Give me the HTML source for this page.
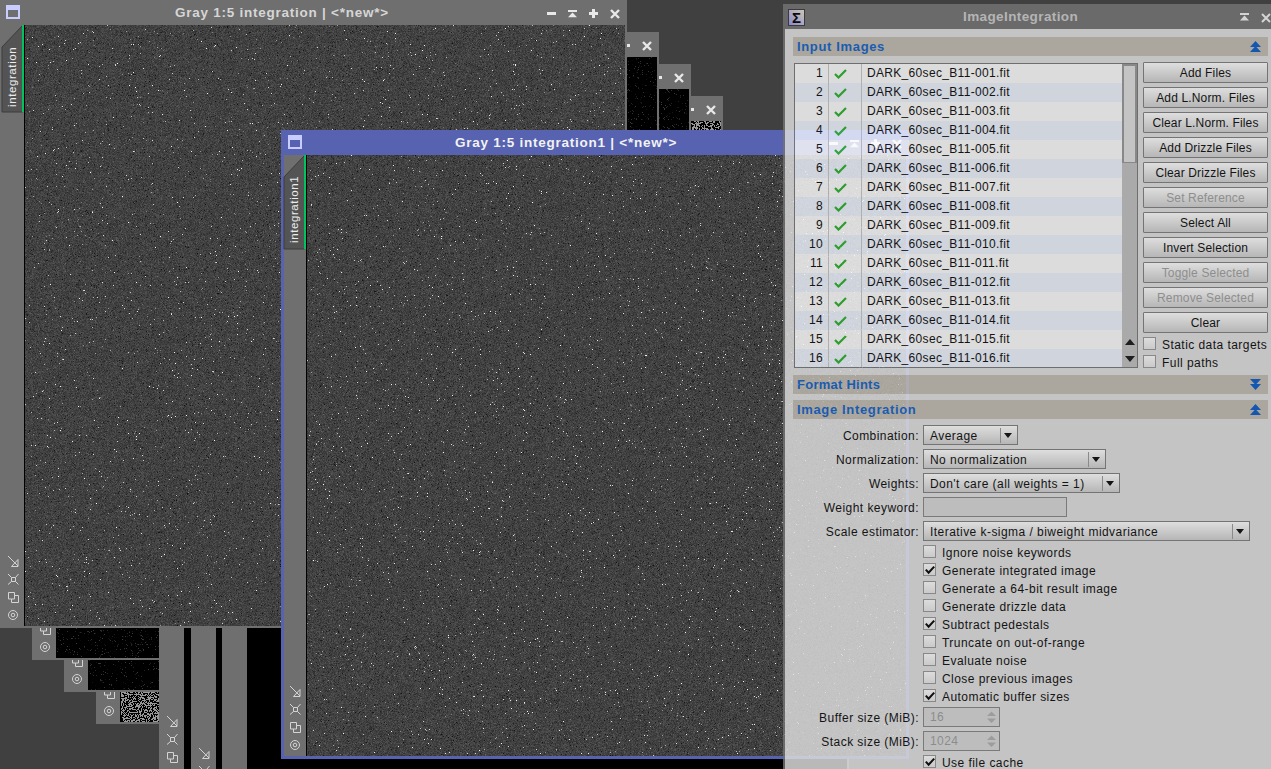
<!DOCTYPE html><html><head><meta charset="utf-8"><style>
*{box-sizing:border-box;margin:0;padding:0}
html,body{width:1271px;height:769px;overflow:hidden;background:#404040;font-family:"Liberation Sans",sans-serif}
body{position:relative}
.a{position:absolute}
canvas{position:absolute;left:0;top:0}
.win{position:absolute;width:627px;height:628px;background:#6f6f6f}
.ttl{position:absolute;top:0;height:25px;line-height:25px;font-weight:bold;font-size:13.5px;letter-spacing:0.75px;color:#d6d6d6;white-space:nowrap}
.t12{font-size:12px;letter-spacing:0.45px;color:#0b0b0b;white-space:nowrap}
.hdr{position:absolute;left:8px;width:475px;height:19px;background:#c1bcb2}
.hdr span{position:absolute;left:4px;top:0;line-height:19px;font-size:13px;font-weight:bold;letter-spacing:0.7px;color:#1362c8;white-space:nowrap}
.row{position:absolute;left:0;width:327px;height:19px;letter-spacing:0.32px}
.row .n{position:absolute;left:0;width:28px;text-align:right;line-height:19px}
.row .f{position:absolute;left:72px;line-height:19px}
.btn{position:absolute;width:125px;height:21px;border:1px solid #7f7f7f;border-radius:1px;background:linear-gradient(#fefefe,#cecece);text-align:center;line-height:21px;letter-spacing:0.15px}
.btn.dis{color:#9e9e9e}
.cb{position:absolute;width:13px;height:13px;border:1px solid #979797;background:linear-gradient(#fcfcfc,#e6e6e6)}
.lbl{position:absolute;line-height:16px}
.combo{position:absolute;height:20px;border:1px solid #7f7f7f;background:linear-gradient(#fefefe,#cecece)}
.combo span{position:absolute;left:6px;top:0;line-height:18px}
.combo i{position:absolute;top:2px;width:1px;height:15px;background:#999999}
.combo b{position:absolute;top:7px;width:0;height:0;border-left:4.5px solid transparent;border-right:4.5px solid transparent;border-top:5.5px solid #0b0b0b}
.rlbl{position:absolute;right:356px;line-height:20px;text-align:right}
</style></head><body>
<div class="win" style="left:96px;top:96px"><div class="a" style="left:24px;top:25px;width:601px;height:601px;background:#000"></div><div class="a" style="left:25px;top:25px;width:600px;height:601px;background:#4c4c4c"><canvas width="600" height="601" data-n="c" data-m="152"></canvas></div><div class="a" style="left:6px;top:5px;width:14px;height:14px;background:#c8ccff"><div class="a" style="left:2px;top:5px;width:10px;height:7px;background:#6f6f6f"></div></div><div class="a" style="left:547px;top:12px;width:9px;height:3px;background:#e8e8e8"></div><svg class="a" style="left:568px;top:10px" width="10" height="8"><rect x="0" y="0" width="9" height="2" fill="#e8e8e8"/><path d="M4.5 2.5L9 7.2H0Z" fill="#e8e8e8"/></svg><svg class="a" style="left:589px;top:9px" width="10" height="10"><rect x="3" y="0" width="3" height="9" fill="#e8e8e8"/><rect x="0" y="3" width="9" height="3" fill="#e8e8e8"/></svg><svg class="a" style="left:610px;top:9px" width="10" height="10"><path d="M1 1L9 9M9 1L1 9" stroke="#e8e8e8" stroke-width="2.4"/></svg><svg class="a" style="left:8px;top:556px" width="11" height="11" fill="none" stroke="#d4d4d4" stroke-width="1"><path d="M0 0L10 10M10 3.5V10.5H3.5L10 3.5"/></svg><svg class="a" style="left:8px;top:574px" width="11" height="11" fill="none" stroke="#d4d4d4" stroke-width="1"><path d="M3.5 3.5H7.5V7.5H3.5ZM0 0L3.5 3.5M10.5 0L7.5 3.5M0 10.5L3.5 7.5M10.5 10.5L7.5 7.5"/></svg><svg class="a" style="left:8px;top:592px" width="11" height="11" fill="none" stroke="#d4d4d4" stroke-width="1"><path d="M0.5 0.5H6.5V7H0.5ZM6.5 3.5H10.5V10.5H3.5V7"/></svg><svg class="a" style="left:8px;top:610px" width="11" height="11" fill="none" stroke="#d4d4d4" stroke-width="1"><circle cx="5" cy="5" r="4.5"/><circle cx="5" cy="5" r="1.8"/></svg></div>
<div class="win" style="left:64px;top:64px"><div class="a" style="left:24px;top:25px;width:601px;height:601px;background:#000"></div><div class="a" style="left:25px;top:25px;width:600px;height:601px;background:#000"><canvas width="600" height="601" data-n="b" data-m="60" data-st="0.08"></canvas></div><div class="a" style="left:6px;top:5px;width:14px;height:14px;background:#c8ccff"><div class="a" style="left:2px;top:5px;width:10px;height:7px;background:#6f6f6f"></div></div><div class="a" style="left:547px;top:12px;width:9px;height:3px;background:#e8e8e8"></div><svg class="a" style="left:568px;top:10px" width="10" height="8"><rect x="0" y="0" width="9" height="2" fill="#e8e8e8"/><path d="M4.5 2.5L9 7.2H0Z" fill="#e8e8e8"/></svg><svg class="a" style="left:589px;top:9px" width="10" height="10"><rect x="3" y="0" width="3" height="9" fill="#e8e8e8"/><rect x="0" y="3" width="9" height="3" fill="#e8e8e8"/></svg><svg class="a" style="left:610px;top:9px" width="10" height="10"><path d="M1 1L9 9M9 1L1 9" stroke="#e8e8e8" stroke-width="2.4"/></svg><svg class="a" style="left:8px;top:556px" width="11" height="11" fill="none" stroke="#d4d4d4" stroke-width="1"><path d="M0 0L10 10M10 3.5V10.5H3.5L10 3.5"/></svg><svg class="a" style="left:8px;top:574px" width="11" height="11" fill="none" stroke="#d4d4d4" stroke-width="1"><path d="M3.5 3.5H7.5V7.5H3.5ZM0 0L3.5 3.5M10.5 0L7.5 3.5M0 10.5L3.5 7.5M10.5 10.5L7.5 7.5"/></svg><svg class="a" style="left:8px;top:592px" width="11" height="11" fill="none" stroke="#d4d4d4" stroke-width="1"><path d="M0.5 0.5H6.5V7H0.5ZM6.5 3.5H10.5V10.5H3.5V7"/></svg><svg class="a" style="left:8px;top:610px" width="11" height="11" fill="none" stroke="#d4d4d4" stroke-width="1"><circle cx="5" cy="5" r="4.5"/><circle cx="5" cy="5" r="1.8"/></svg></div>
<div class="win" style="left:32px;top:32px"><div class="a" style="left:24px;top:25px;width:601px;height:601px;background:#000"></div><div class="a" style="left:25px;top:25px;width:600px;height:601px;background:#000"><canvas width="600" height="601" data-n="b" data-m="60" data-st="0.08"></canvas></div><div class="a" style="left:6px;top:5px;width:14px;height:14px;background:#c8ccff"><div class="a" style="left:2px;top:5px;width:10px;height:7px;background:#6f6f6f"></div></div><div class="a" style="left:547px;top:12px;width:9px;height:3px;background:#e8e8e8"></div><svg class="a" style="left:568px;top:10px" width="10" height="8"><rect x="0" y="0" width="9" height="2" fill="#e8e8e8"/><path d="M4.5 2.5L9 7.2H0Z" fill="#e8e8e8"/></svg><svg class="a" style="left:589px;top:9px" width="10" height="10"><rect x="3" y="0" width="3" height="9" fill="#e8e8e8"/><rect x="0" y="3" width="9" height="3" fill="#e8e8e8"/></svg><svg class="a" style="left:610px;top:9px" width="10" height="10"><path d="M1 1L9 9M9 1L1 9" stroke="#e8e8e8" stroke-width="2.4"/></svg><svg class="a" style="left:8px;top:556px" width="11" height="11" fill="none" stroke="#d4d4d4" stroke-width="1"><path d="M0 0L10 10M10 3.5V10.5H3.5L10 3.5"/></svg><svg class="a" style="left:8px;top:574px" width="11" height="11" fill="none" stroke="#d4d4d4" stroke-width="1"><path d="M3.5 3.5H7.5V7.5H3.5ZM0 0L3.5 3.5M10.5 0L7.5 3.5M0 10.5L3.5 7.5M10.5 10.5L7.5 7.5"/></svg><svg class="a" style="left:8px;top:592px" width="11" height="11" fill="none" stroke="#d4d4d4" stroke-width="1"><path d="M0.5 0.5H6.5V7H0.5ZM6.5 3.5H10.5V10.5H3.5V7"/></svg><svg class="a" style="left:8px;top:610px" width="11" height="11" fill="none" stroke="#d4d4d4" stroke-width="1"><circle cx="5" cy="5" r="4.5"/><circle cx="5" cy="5" r="1.8"/></svg></div>
<div class="win" style="left:159px;top:160px"><div class="a" style="left:25px;top:25px;width:600px;height:601px;background:#000"></div><div class="a" style="left:26px;top:25px;width:599px;height:601px;background:#000"></div><div class="a" style="left:6px;top:5px;width:14px;height:14px;background:#c8ccff"><div class="a" style="left:2px;top:5px;width:10px;height:7px;background:#6f6f6f"></div></div><div class="a" style="left:547px;top:12px;width:9px;height:3px;background:#e8e8e8"></div><svg class="a" style="left:568px;top:10px" width="10" height="8"><rect x="0" y="0" width="9" height="2" fill="#e8e8e8"/><path d="M4.5 2.5L9 7.2H0Z" fill="#e8e8e8"/></svg><svg class="a" style="left:589px;top:9px" width="10" height="10"><rect x="3" y="0" width="3" height="9" fill="#e8e8e8"/><rect x="0" y="3" width="9" height="3" fill="#e8e8e8"/></svg><svg class="a" style="left:610px;top:9px" width="10" height="10"><path d="M1 1L9 9M9 1L1 9" stroke="#e8e8e8" stroke-width="2.4"/></svg><svg class="a" style="left:8px;top:556px" width="11" height="11" fill="none" stroke="#d4d4d4" stroke-width="1"><path d="M0 0L10 10M10 3.5V10.5H3.5L10 3.5"/></svg><svg class="a" style="left:8px;top:574px" width="11" height="11" fill="none" stroke="#d4d4d4" stroke-width="1"><path d="M3.5 3.5H7.5V7.5H3.5ZM0 0L3.5 3.5M10.5 0L7.5 3.5M0 10.5L3.5 7.5M10.5 10.5L7.5 7.5"/></svg><svg class="a" style="left:8px;top:592px" width="11" height="11" fill="none" stroke="#d4d4d4" stroke-width="1"><path d="M0.5 0.5H6.5V7H0.5ZM6.5 3.5H10.5V10.5H3.5V7"/></svg><svg class="a" style="left:8px;top:610px" width="11" height="11" fill="none" stroke="#d4d4d4" stroke-width="1"><circle cx="5" cy="5" r="4.5"/><circle cx="5" cy="5" r="1.8"/></svg></div>
<div class="win" style="left:191px;top:192px"><div class="a" style="left:25px;top:25px;width:600px;height:601px;background:#000"></div><div class="a" style="left:26px;top:25px;width:599px;height:601px;background:#000"></div><div class="a" style="left:6px;top:5px;width:14px;height:14px;background:#c8ccff"><div class="a" style="left:2px;top:5px;width:10px;height:7px;background:#6f6f6f"></div></div><div class="a" style="left:547px;top:12px;width:9px;height:3px;background:#e8e8e8"></div><svg class="a" style="left:568px;top:10px" width="10" height="8"><rect x="0" y="0" width="9" height="2" fill="#e8e8e8"/><path d="M4.5 2.5L9 7.2H0Z" fill="#e8e8e8"/></svg><svg class="a" style="left:589px;top:9px" width="10" height="10"><rect x="3" y="0" width="3" height="9" fill="#e8e8e8"/><rect x="0" y="3" width="9" height="3" fill="#e8e8e8"/></svg><svg class="a" style="left:610px;top:9px" width="10" height="10"><path d="M1 1L9 9M9 1L1 9" stroke="#e8e8e8" stroke-width="2.4"/></svg><svg class="a" style="left:8px;top:556px" width="11" height="11" fill="none" stroke="#d4d4d4" stroke-width="1"><path d="M0 0L10 10M10 3.5V10.5H3.5L10 3.5"/></svg><svg class="a" style="left:8px;top:574px" width="11" height="11" fill="none" stroke="#d4d4d4" stroke-width="1"><path d="M3.5 3.5H7.5V7.5H3.5ZM0 0L3.5 3.5M10.5 0L7.5 3.5M0 10.5L3.5 7.5M10.5 10.5L7.5 7.5"/></svg><svg class="a" style="left:8px;top:592px" width="11" height="11" fill="none" stroke="#d4d4d4" stroke-width="1"><path d="M0.5 0.5H6.5V7H0.5ZM6.5 3.5H10.5V10.5H3.5V7"/></svg><svg class="a" style="left:8px;top:610px" width="11" height="11" fill="none" stroke="#d4d4d4" stroke-width="1"><circle cx="5" cy="5" r="4.5"/><circle cx="5" cy="5" r="1.8"/></svg></div>
<div class="win" style="left:222px;top:224px"><div class="a" style="left:25px;top:25px;width:600px;height:601px;background:#000"></div><div class="a" style="left:26px;top:25px;width:599px;height:601px;background:#000"></div><div class="a" style="left:6px;top:5px;width:14px;height:14px;background:#c8ccff"><div class="a" style="left:2px;top:5px;width:10px;height:7px;background:#6f6f6f"></div></div><div class="a" style="left:547px;top:12px;width:9px;height:3px;background:#e8e8e8"></div><svg class="a" style="left:568px;top:10px" width="10" height="8"><rect x="0" y="0" width="9" height="2" fill="#e8e8e8"/><path d="M4.5 2.5L9 7.2H0Z" fill="#e8e8e8"/></svg><svg class="a" style="left:589px;top:9px" width="10" height="10"><rect x="3" y="0" width="3" height="9" fill="#e8e8e8"/><rect x="0" y="3" width="9" height="3" fill="#e8e8e8"/></svg><svg class="a" style="left:610px;top:9px" width="10" height="10"><path d="M1 1L9 9M9 1L1 9" stroke="#e8e8e8" stroke-width="2.4"/></svg><svg class="a" style="left:8px;top:556px" width="11" height="11" fill="none" stroke="#d4d4d4" stroke-width="1"><path d="M0 0L10 10M10 3.5V10.5H3.5L10 3.5"/></svg><svg class="a" style="left:8px;top:574px" width="11" height="11" fill="none" stroke="#d4d4d4" stroke-width="1"><path d="M3.5 3.5H7.5V7.5H3.5ZM0 0L3.5 3.5M10.5 0L7.5 3.5M0 10.5L3.5 7.5M10.5 10.5L7.5 7.5"/></svg><svg class="a" style="left:8px;top:592px" width="11" height="11" fill="none" stroke="#d4d4d4" stroke-width="1"><path d="M0.5 0.5H6.5V7H0.5ZM6.5 3.5H10.5V10.5H3.5V7"/></svg><svg class="a" style="left:8px;top:610px" width="11" height="11" fill="none" stroke="#d4d4d4" stroke-width="1"><circle cx="5" cy="5" r="4.5"/><circle cx="5" cy="5" r="1.8"/></svg></div>
<div class="win" style="left:0px;top:0px"><div class="a" style="left:24px;top:25px;width:601px;height:601px;background:#000"></div><div class="a" style="left:25px;top:25px;width:600px;height:601px;background:#424242"><canvas width="600" height="601" data-n="g" data-m="65" data-sd="10" data-st="0.009"></canvas></div><div class="a" style="left:6px;top:5px;width:14px;height:14px;background:#c8ccff"><div class="a" style="left:2px;top:5px;width:10px;height:7px;background:#6f6f6f"></div></div><div class="ttl" style="left:175px">Gray 1:5 integration | &lt;*new*&gt;</div><div class="a" style="left:547px;top:12px;width:9px;height:3px;background:#e8e8e8"></div><svg class="a" style="left:568px;top:10px" width="10" height="8"><rect x="0" y="0" width="9" height="2" fill="#e8e8e8"/><path d="M4.5 2.5L9 7.2H0Z" fill="#e8e8e8"/></svg><svg class="a" style="left:589px;top:9px" width="10" height="10"><rect x="3" y="0" width="3" height="9" fill="#e8e8e8"/><rect x="0" y="3" width="9" height="3" fill="#e8e8e8"/></svg><svg class="a" style="left:610px;top:9px" width="10" height="10"><path d="M1 1L9 9M9 1L1 9" stroke="#e8e8e8" stroke-width="2.4"/></svg><svg class="a" style="left:8px;top:556px" width="11" height="11" fill="none" stroke="#d4d4d4" stroke-width="1"><path d="M0 0L10 10M10 3.5V10.5H3.5L10 3.5"/></svg><svg class="a" style="left:8px;top:574px" width="11" height="11" fill="none" stroke="#d4d4d4" stroke-width="1"><path d="M3.5 3.5H7.5V7.5H3.5ZM0 0L3.5 3.5M10.5 0L7.5 3.5M0 10.5L3.5 7.5M10.5 10.5L7.5 7.5"/></svg><svg class="a" style="left:8px;top:592px" width="11" height="11" fill="none" stroke="#d4d4d4" stroke-width="1"><path d="M0.5 0.5H6.5V7H0.5ZM6.5 3.5H10.5V10.5H3.5V7"/></svg><svg class="a" style="left:8px;top:610px" width="11" height="11" fill="none" stroke="#d4d4d4" stroke-width="1"><circle cx="5" cy="5" r="4.5"/><circle cx="5" cy="5" r="1.8"/></svg><svg class="a" style="left:0px;top:25px" width="25" height="90"><path d="M2 22L22.5 0.5V87H2Z" fill="#545454" stroke="#3c3c3c" stroke-width="1"/><rect x="22" y="0" width="2" height="87" fill="#00c25e"/></svg><div class="a" style="left:6px;top:107px;transform-origin:0 0;transform:rotate(-90deg);font-size:11.5px;line-height:12px;color:#ececec;white-space:nowrap;letter-spacing:0.6px">integration</div></div>
<div class="a" style="left:281px;top:130px;width:628px;height:629px;background:#5762b0"><div class="a" style="left:7px;top:5px;width:14px;height:14px;background:#c8ccff"><div class="a" style="left:2px;top:5px;width:10px;height:7px;background:#5762b0"></div></div><div class="ttl" style="left:174px;color:#f2f2f2">Gray 1:5 integration1 | &lt;*new*&gt;</div><div class="a" style="left:3px;top:25px;width:22px;height:601px;background:#6f6f6f"></div><div class="a" style="left:25px;top:25px;width:600px;height:601px;background:#000"></div><div class="a" style="left:26px;top:25px;width:599px;height:601px;background:#424242"><canvas width="599" height="601" data-n="g" data-m="65" data-sd="10" data-st="0.009"></canvas></div><div class="a" style="left:1px;top:0"><svg class="a" style="left:0px;top:25px" width="25" height="97"><path d="M2 22L22.5 0.5V94H2Z" fill="#545454" stroke="#3c3c3c" stroke-width="1"/><rect x="22" y="0" width="2" height="94" fill="#00c25e"/></svg><div class="a" style="left:6px;top:113px;transform-origin:0 0;transform:rotate(-90deg);font-size:11.5px;line-height:12px;color:#ececec;white-space:nowrap;letter-spacing:0.6px">integration1</div></div><div class="a" style="left:548px;top:12px;width:9px;height:3px;background:#f0f0f0"></div><svg class="a" style="left:569px;top:10px" width="10" height="8"><rect x="0" y="0" width="9" height="2" fill="#f0f0f0"/><path d="M4.5 2.5L9 7.2H0Z" fill="#f0f0f0"/></svg><svg class="a" style="left:590px;top:9px" width="10" height="10"><rect x="3" y="0" width="3" height="9" fill="#f0f0f0"/><rect x="0" y="3" width="9" height="3" fill="#f0f0f0"/></svg><svg class="a" style="left:611px;top:9px" width="10" height="10"><path d="M1 1L9 9M9 1L1 9" stroke="#f0f0f0" stroke-width="2.4"/></svg><svg class="a" style="left:9px;top:556px" width="11" height="11" fill="none" stroke="#d4d4d4" stroke-width="1"><path d="M0 0L10 10M10 3.5V10.5H3.5L10 3.5"/></svg><svg class="a" style="left:9px;top:574px" width="11" height="11" fill="none" stroke="#d4d4d4" stroke-width="1"><path d="M3.5 3.5H7.5V7.5H3.5ZM0 0L3.5 3.5M10.5 0L7.5 3.5M0 10.5L3.5 7.5M10.5 10.5L7.5 7.5"/></svg><svg class="a" style="left:9px;top:592px" width="11" height="11" fill="none" stroke="#d4d4d4" stroke-width="1"><path d="M0.5 0.5H6.5V7H0.5ZM6.5 3.5H10.5V10.5H3.5V7"/></svg><svg class="a" style="left:9px;top:610px" width="11" height="11" fill="none" stroke="#d4d4d4" stroke-width="1"><circle cx="5" cy="5" r="4.5"/><circle cx="5" cy="5" r="1.8"/></svg></div>
<div class="a" style="left:783px;top:4px;width:490px;height:770px;opacity:0.83;background:#737373"><div class="a" style="left:5px;top:5px;width:17px;height:17px;border:1px solid #3a3a3a;background:linear-gradient(45deg,#9898f0,#ece0c8);font-size:15px;font-weight:bold;line-height:16px;text-align:center;color:#000">&#931;</div><div class="ttl" style="left:180px;color:#cccccc;letter-spacing:0.4px">ImageIntegration</div><svg class="a" style="left:457px;top:9px" width="10" height="9"><rect x="0" y="0" width="9" height="2" fill="#f2f2f2"/><path d="M4.5 2.5L9 7.5H0Z" fill="#f2f2f2"/></svg><svg class="a" style="left:478px;top:9px" width="10" height="10"><path d="M1 1L9 9M9 1L1 9" stroke="#f2f2f2" stroke-width="2"/></svg><div class="a" style="left:2px;top:25px;width:490px;height:750px;background:#dfdfdf"><div class="hdr" style="top:8px"><span style="letter-spacing:0.65px">Input Images</span><svg class="a" style="left:457px;top:4px" width="11" height="11"><path d="M0 6L5.5 0L11 6Z M0 11L5.5 5L11 11Z" fill="#0d5bc7"/></svg></div><div class="a" style="left:9px;top:34px;width:344px;height:305px;border:1px solid #777777;background:#fcfcfc;overflow:hidden"><div class="row t12" style="top:0px;background:#fcfcfc"><span class="n">1</span><span class="f">DARK_60sec_B11-001.fit</span><svg class="a" style="left:39px;top:5px" width="13" height="10"><path d="M1 5L4.5 8.5L12 1" fill="none" stroke="#2ab12a" stroke-width="2.2"/></svg></div><div class="row t12" style="top:19px;background:#ecf2fd"><span class="n">2</span><span class="f">DARK_60sec_B11-002.fit</span><svg class="a" style="left:39px;top:5px" width="13" height="10"><path d="M1 5L4.5 8.5L12 1" fill="none" stroke="#2ab12a" stroke-width="2.2"/></svg></div><div class="row t12" style="top:38px;background:#fcfcfc"><span class="n">3</span><span class="f">DARK_60sec_B11-003.fit</span><svg class="a" style="left:39px;top:5px" width="13" height="10"><path d="M1 5L4.5 8.5L12 1" fill="none" stroke="#2ab12a" stroke-width="2.2"/></svg></div><div class="row t12" style="top:57px;background:#ecf2fd"><span class="n">4</span><span class="f">DARK_60sec_B11-004.fit</span><svg class="a" style="left:39px;top:5px" width="13" height="10"><path d="M1 5L4.5 8.5L12 1" fill="none" stroke="#2ab12a" stroke-width="2.2"/></svg></div><div class="row t12" style="top:76px;background:#fcfcfc"><span class="n">5</span><span class="f">DARK_60sec_B11-005.fit</span><svg class="a" style="left:39px;top:5px" width="13" height="10"><path d="M1 5L4.5 8.5L12 1" fill="none" stroke="#2ab12a" stroke-width="2.2"/></svg></div><div class="row t12" style="top:95px;background:#ecf2fd"><span class="n">6</span><span class="f">DARK_60sec_B11-006.fit</span><svg class="a" style="left:39px;top:5px" width="13" height="10"><path d="M1 5L4.5 8.5L12 1" fill="none" stroke="#2ab12a" stroke-width="2.2"/></svg></div><div class="row t12" style="top:114px;background:#fcfcfc"><span class="n">7</span><span class="f">DARK_60sec_B11-007.fit</span><svg class="a" style="left:39px;top:5px" width="13" height="10"><path d="M1 5L4.5 8.5L12 1" fill="none" stroke="#2ab12a" stroke-width="2.2"/></svg></div><div class="row t12" style="top:133px;background:#ecf2fd"><span class="n">8</span><span class="f">DARK_60sec_B11-008.fit</span><svg class="a" style="left:39px;top:5px" width="13" height="10"><path d="M1 5L4.5 8.5L12 1" fill="none" stroke="#2ab12a" stroke-width="2.2"/></svg></div><div class="row t12" style="top:152px;background:#fcfcfc"><span class="n">9</span><span class="f">DARK_60sec_B11-009.fit</span><svg class="a" style="left:39px;top:5px" width="13" height="10"><path d="M1 5L4.5 8.5L12 1" fill="none" stroke="#2ab12a" stroke-width="2.2"/></svg></div><div class="row t12" style="top:171px;background:#ecf2fd"><span class="n">10</span><span class="f">DARK_60sec_B11-010.fit</span><svg class="a" style="left:39px;top:5px" width="13" height="10"><path d="M1 5L4.5 8.5L12 1" fill="none" stroke="#2ab12a" stroke-width="2.2"/></svg></div><div class="row t12" style="top:190px;background:#fcfcfc"><span class="n">11</span><span class="f">DARK_60sec_B11-011.fit</span><svg class="a" style="left:39px;top:5px" width="13" height="10"><path d="M1 5L4.5 8.5L12 1" fill="none" stroke="#2ab12a" stroke-width="2.2"/></svg></div><div class="row t12" style="top:209px;background:#ecf2fd"><span class="n">12</span><span class="f">DARK_60sec_B11-012.fit</span><svg class="a" style="left:39px;top:5px" width="13" height="10"><path d="M1 5L4.5 8.5L12 1" fill="none" stroke="#2ab12a" stroke-width="2.2"/></svg></div><div class="row t12" style="top:228px;background:#fcfcfc"><span class="n">13</span><span class="f">DARK_60sec_B11-013.fit</span><svg class="a" style="left:39px;top:5px" width="13" height="10"><path d="M1 5L4.5 8.5L12 1" fill="none" stroke="#2ab12a" stroke-width="2.2"/></svg></div><div class="row t12" style="top:247px;background:#ecf2fd"><span class="n">14</span><span class="f">DARK_60sec_B11-014.fit</span><svg class="a" style="left:39px;top:5px" width="13" height="10"><path d="M1 5L4.5 8.5L12 1" fill="none" stroke="#2ab12a" stroke-width="2.2"/></svg></div><div class="row t12" style="top:266px;background:#fcfcfc"><span class="n">15</span><span class="f">DARK_60sec_B11-015.fit</span><svg class="a" style="left:39px;top:5px" width="13" height="10"><path d="M1 5L4.5 8.5L12 1" fill="none" stroke="#2ab12a" stroke-width="2.2"/></svg></div><div class="row t12" style="top:285px;background:#ecf2fd"><span class="n">16</span><span class="f">DARK_60sec_B11-016.fit</span><svg class="a" style="left:39px;top:5px" width="13" height="10"><path d="M1 5L4.5 8.5L12 1" fill="none" stroke="#2ab12a" stroke-width="2.2"/></svg></div><div class="a" style="left:33px;top:0;width:1px;height:305px;background:#c7c7c7"></div><div class="a" style="left:66px;top:0;width:1px;height:305px;background:#c7c7c7"></div><div class="a" style="left:327px;top:0;width:16px;height:305px;background:#c0c0c0"></div><div class="a" style="left:327px;top:0;width:15px;height:99px;background:#979797"><div class="a" style="left:2px;top:2px;width:11px;height:96px;background:#dfdfdf"></div></div><svg class="a" style="left:330px;top:275px" width="10" height="6"><path d="M0 6L5 0L10 6Z" fill="#171717"/></svg><svg class="a" style="left:330px;top:292px" width="10" height="6"><path d="M0 0L5 6L10 0Z" fill="#171717"/></svg></div><div class="btn t12" style="left:358px;top:33px">Add Files</div><div class="btn t12" style="left:358px;top:58px">Add L.Norm. Files</div><div class="btn t12" style="left:358px;top:83px">Clear L.Norm. Files</div><div class="btn t12" style="left:358px;top:108px">Add Drizzle Files</div><div class="btn t12" style="left:358px;top:133px">Clear Drizzle Files</div><div class="btn t12 dis" style="left:358px;top:158px">Set Reference</div><div class="btn t12" style="left:358px;top:183px">Select All</div><div class="btn t12" style="left:358px;top:208px">Invert Selection</div><div class="btn t12 dis" style="left:358px;top:233px">Toggle Selected</div><div class="btn t12 dis" style="left:358px;top:258px">Remove Selected</div><div class="btn t12" style="left:358px;top:283px">Clear</div><div class="cb" style="left:358px;top:308px"></div><div class="lbl t12" style="left:377px;top:308px">Static data targets</div><div class="cb" style="left:358px;top:326px"></div><div class="lbl t12" style="left:377px;top:326px">Full paths</div><div class="hdr" style="top:346px"><span style="letter-spacing:0.25px">Format Hints</span><svg class="a" style="left:457px;top:4px" width="11" height="11"><path d="M0 0L5.5 6L11 0Z M0 5L5.5 11L11 5Z" fill="#0d5bc7"/></svg></div><div class="hdr" style="top:371px"><span style="letter-spacing:0.65px">Image Integration</span><svg class="a" style="left:457px;top:4px" width="11" height="11"><path d="M0 6L5.5 0L11 6Z M0 11L5.5 5L11 11Z" fill="#0d5bc7"/></svg></div><div class="rlbl t12" style="top:397px">Combination:</div><div class="combo t12" style="left:138px;top:396px;width:95px"><span style="top:1px">Average</span><i style="left:76px"></i><b style="left:80px"></b></div><div class="rlbl t12" style="top:421px">Normalization:</div><div class="combo t12" style="left:138px;top:420px;width:183px"><span style="top:1px">No normalization</span><i style="left:164px"></i><b style="left:168px"></b></div><div class="rlbl t12" style="top:445px">Weights:</div><div class="combo t12" style="left:138px;top:444px;width:197px"><span style="top:1px">Don't care (all weights = 1)</span><i style="left:178px"></i><b style="left:182px"></b></div><div class="rlbl t12" style="top:493px">Scale estimator:</div><div class="combo t12" style="left:138px;top:492px;width:327px"><span style="top:1px">Iterative k-sigma / biweight midvariance</span><i style="left:308px"></i><b style="left:312px"></b></div><div class="rlbl t12" style="top:469px">Weight keyword:</div><div class="a" style="left:138px;top:468px;width:144px;height:20px;border:1px solid #868686;background:#d7d7d7"></div><div class="cb" style="left:138px;top:516px"></div><div class="lbl t12" style="left:157px;top:516px">Ignore noise keywords</div><div class="cb" style="left:138px;top:534px"><svg class="a" style="left:0;top:0" width="12" height="12"><path d="M1.8 5.6L4.6 8.6L10.2 2.6" fill="none" stroke="#070707" stroke-width="2.1"/></svg></div><div class="lbl t12" style="left:157px;top:534px">Generate integrated image</div><div class="cb" style="left:138px;top:552px"></div><div class="lbl t12" style="left:157px;top:552px">Generate a 64-bit result image</div><div class="cb" style="left:138px;top:570px"></div><div class="lbl t12" style="left:157px;top:570px">Generate drizzle data</div><div class="cb" style="left:138px;top:588px"><svg class="a" style="left:0;top:0" width="12" height="12"><path d="M1.8 5.6L4.6 8.6L10.2 2.6" fill="none" stroke="#070707" stroke-width="2.1"/></svg></div><div class="lbl t12" style="left:157px;top:588px">Subtract pedestals</div><div class="cb" style="left:138px;top:606px"></div><div class="lbl t12" style="left:157px;top:606px">Truncate on out-of-range</div><div class="cb" style="left:138px;top:624px"></div><div class="lbl t12" style="left:157px;top:624px">Evaluate noise</div><div class="cb" style="left:138px;top:642px"></div><div class="lbl t12" style="left:157px;top:642px">Close previous images</div><div class="cb" style="left:138px;top:660px"><svg class="a" style="left:0;top:0" width="12" height="12"><path d="M1.8 5.6L4.6 8.6L10.2 2.6" fill="none" stroke="#070707" stroke-width="2.1"/></svg></div><div class="lbl t12" style="left:157px;top:660px">Automatic buffer sizes</div><div class="rlbl t12" style="top:679px">Buffer size (MiB):</div><div class="a t12" style="left:138px;top:678px;width:77px;height:20px;border:1px solid #868686;background:#d7d7d7;color:#9c9c9c;line-height:19px;padding-left:6px">16<svg class="a" style="left:62px;top:2px" width="11" height="15"><path d="M1 6L5.5 1.5L10 6Z" fill="#afafaf"/><path d="M1 8.5L5.5 13L10 8.5Z" fill="#afafaf"/></svg></div><div class="rlbl t12" style="top:703px">Stack size (MiB):</div><div class="a t12" style="left:138px;top:702px;width:77px;height:20px;border:1px solid #868686;background:#d7d7d7;color:#9c9c9c;line-height:19px;padding-left:6px">1024<svg class="a" style="left:62px;top:2px" width="11" height="15"><path d="M1 6L5.5 1.5L10 6Z" fill="#afafaf"/><path d="M1 8.5L5.5 13L10 8.5Z" fill="#afafaf"/></svg></div><div class="cb" style="left:138px;top:726px"><svg class="a" style="left:0;top:0" width="12" height="12"><path d="M1.8 5.6L4.6 8.6L10.2 2.6" fill="none" stroke="#070707" stroke-width="2.1"/></svg></div><div class="lbl t12" style="left:157px;top:726px">Use file cache</div></div></div>
<script>
(function(){
 function rng(seed){var s=seed>>>0;return function(){s^=s<<13;s>>>=0;s^=s>>>17;s^=s<<5;s>>>=0;return s/4294967296;};}
 function gauss(r){var u=r()||1e-9,v=r();return Math.sqrt(-2*Math.log(u))*Math.cos(6.283185*v);}
 var cs=document.querySelectorAll('canvas[data-n]');
 for(var k=0;k<cs.length;k++){
  var c=cs[k],t=c.getAttribute('data-n'),w=c.width,h=c.height,ctx=c.getContext('2d');
  var id=ctx.createImageData(w,h),d=id.data,r=rng(12345+k*7919);
  var m=+c.getAttribute('data-m')||66, sd=+c.getAttribute('data-sd')||14, st=+c.getAttribute('data-st')||0.01;
  for(var i=0;i<w*h;i++){
   var v;
   if(t=='g'){ v=m+sd*gauss(r); var q=r(); if(q<st){v=110+140*r();} else if(q<st+0.012){v=15+25*r();} }
   else if(t=='b'){ v=0; if(r()<st){v=m*r();} }
   else { v = r()<0.5?0:m; }
   v=v<0?0:v>255?255:v;
   d[i*4]=v;d[i*4+1]=v;d[i*4+2]=v;d[i*4+3]=255;
  }
  ctx.putImageData(id,0,0);
 }
})();
</script>
</body></html>
